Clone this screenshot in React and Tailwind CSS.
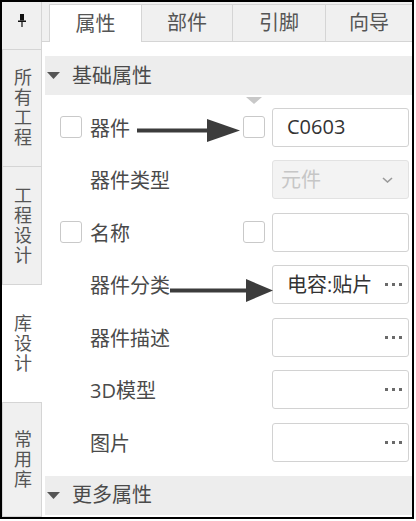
import React from 'react';

const sideTabs = [
  { text: '所有工程', h: 'h-[117px]' },
  { text: '工程设计', h: 'h-[118px]' },
  { text: '库设计', h: 'h-[118px]', active: true },
  { text: '常用库', h: 'flex-1' },
];

const rows = [
  { label: '器件', check: true, kind: 'text', value: 'C0603' },
  { label: '器件类型', kind: 'select', value: '元件' },
  { label: '名称', check: true, kind: 'text', value: '' },
  { label: '器件分类', kind: 'dots', value: '电容:贴片' },
  { label: '器件描述', kind: 'dots', value: '' },
  { label: '3D模型', kind: 'dots', value: '' },
  { label: '图片', kind: 'dots', value: '' },
];

const Checkbox = () => (
  <div className="w-[22px] h-[22px] rounded-[3px] border border-[#c9c9c9] bg-white" />
);

const Dots = () => (
  <div className="flex gap-[4px]">
    <span className="w-[3px] h-[3px] bg-[#6a6a6a]" />
    <span className="w-[3px] h-[3px] bg-[#6a6a6a]" />
    <span className="w-[3px] h-[3px] bg-[#6a6a6a]" />
  </div>
);

const SectionHeader = ({ title }) => (
  <div className="h-[39px] bg-[#ededed] flex items-center pl-[2px] text-[20px] text-[#4a4a4a]">
    <svg width="13" height="7" viewBox="0 0 13 7" className="mr-[12px]">
      <polygon points="0,0 13,0 6.5,7" fill="#555" />
    </svg>
    {title}
  </div>
);

const Arrow = ({ x1, x2, tip, y }) => (
  <svg className="absolute left-0 top-0 pointer-events-none" width="367" height="53">
    <rect x={x1} y={y - 2} width={x2 - x1 + 2} height="4" fill="#3c3c3c" />
    <polygon points={`${x2},${y - 11.5} ${tip},${y} ${x2},${y + 11.5}`} fill="#3c3c3c" />
  </svg>
);

const Field = ({ row }) => {
  if (row.kind === 'select') {
    return (
      <div className="w-[137px] h-[39px] rounded-[3px] border border-[#e2e2e2] bg-[#f3f3f3] flex items-center justify-between pl-[8px] pr-[15px]">
        <span className="text-[#c6c6c6]">{row.value}</span>
        <svg width="11" height="6" viewBox="0 0 11 6">
          <polyline points="1,1 5.5,5 10,1" fill="none" stroke="#9a9a9a" strokeWidth="1.6" />
        </svg>
      </div>
    );
  }
  return (
    <div className="w-[137px] h-[39px] rounded-[3px] border border-[#d2d2d2] bg-white flex items-center justify-between pl-[14px] pr-[6px]">
      <span className="text-[#333]">{row.value}</span>
      {row.kind === 'dots' && <Dots />}
    </div>
  );
};

export default function App() {
  return (
    <div className="w-[416px] h-[521px] bg-white">
      <div className={`w-[414px] h-[519px] border-2 border-black flex overflow-hidden font-['Open_Sans','Noto_Sans_CJK_SC',sans-serif]`}>
        {/* left vertical tabs */}
        <div className="w-[40px] flex flex-col bg-[#f0f0f0]">
          <div className="h-[48px] shrink-0 border-b border-r border-[#d5d5d5] flex justify-center pt-[12px]">
            <svg width="8" height="13" viewBox="0 0 8 13">
              <rect x="2" y="0" width="4" height="6.5" fill="#111" />
              <rect x="0" y="6.5" width="8" height="1.5" fill="#111" />
              <rect x="3.4" y="8" width="1.2" height="5" fill="#111" />
            </svg>
          </div>
          {sideTabs.map((t) => (
            <div
              key={t.text}
              className={`${t.h} shrink-0 flex items-center justify-center text-[18px] text-[#555] border-b border-[#d5d5d5] ${
                t.active ? 'bg-white' : 'bg-[#f0f0f0] border-r border-l'
              }`}
            >
              <span className="[writing-mode:vertical-lr] [text-orientation:upright] tracking-[2px] leading-[20px]">{t.text}</span>
            </div>
          ))}
        </div>

        {/* main panel */}
        <div className="flex-1 flex flex-col">
          <div className="h-[40px] shrink-0 bg-[#f0f0f0] border-b border-[#d5d5d5] flex items-end pl-[7px] text-[20px] text-[#555]">
            <div className="w-[93px] h-[38px] -mb-px bg-white border border-b-0 border-[#d5d5d5] flex items-center justify-center">属性</div>
            <div className="w-[91px] h-[37px] border-t border-r border-[#d5d5d5] flex items-center justify-center">部件</div>
            <div className="w-[93px] h-[37px] border-t border-r border-[#d5d5d5] flex items-center justify-center">引脚</div>
            <div className="flex-1 h-[37px] border-t border-[#d5d5d5] flex items-center justify-center">向导</div>
          </div>

          <div className="flex-1 bg-white pl-[3px] pt-[14px] text-[20px] text-[#4a4a4a]">
            <SectionHeader title="基础属性" />
            <div className="pt-[6px] pb-[7px]">
              {rows.map((row, i) => (
                <div key={row.label} className="relative h-[52.5px] flex items-center pr-[3px]">
                  <div className="w-[45px] pl-[15px] flex">{row.check && <Checkbox />}</div>
                  <div className="flex-1 pt-[3px]">{row.label}</div>
                  <div className="w-[29px] flex">{row.check && <Checkbox />}</div>
                  <Field row={row} />
                  {i === 0 && (
                    <>
                      <svg className="absolute left-[201px] -top-[4px]" width="16" height="7" viewBox="0 0 16 7">
                        <polygon points="0,0 16,0 8,7" fill="#c8c8c8" />
                      </svg>
                      <Arrow x1={92} x2={162} tip={195} y={29.5} />
                    </>
                  )}
                  {i === 3 && <Arrow x1={125} x2={201} tip={228} y={31.5} />}
                </div>
              ))}
            </div>
            <SectionHeader title="更多属性" />
          </div>
        </div>
      </div>
    </div>
  );
}
